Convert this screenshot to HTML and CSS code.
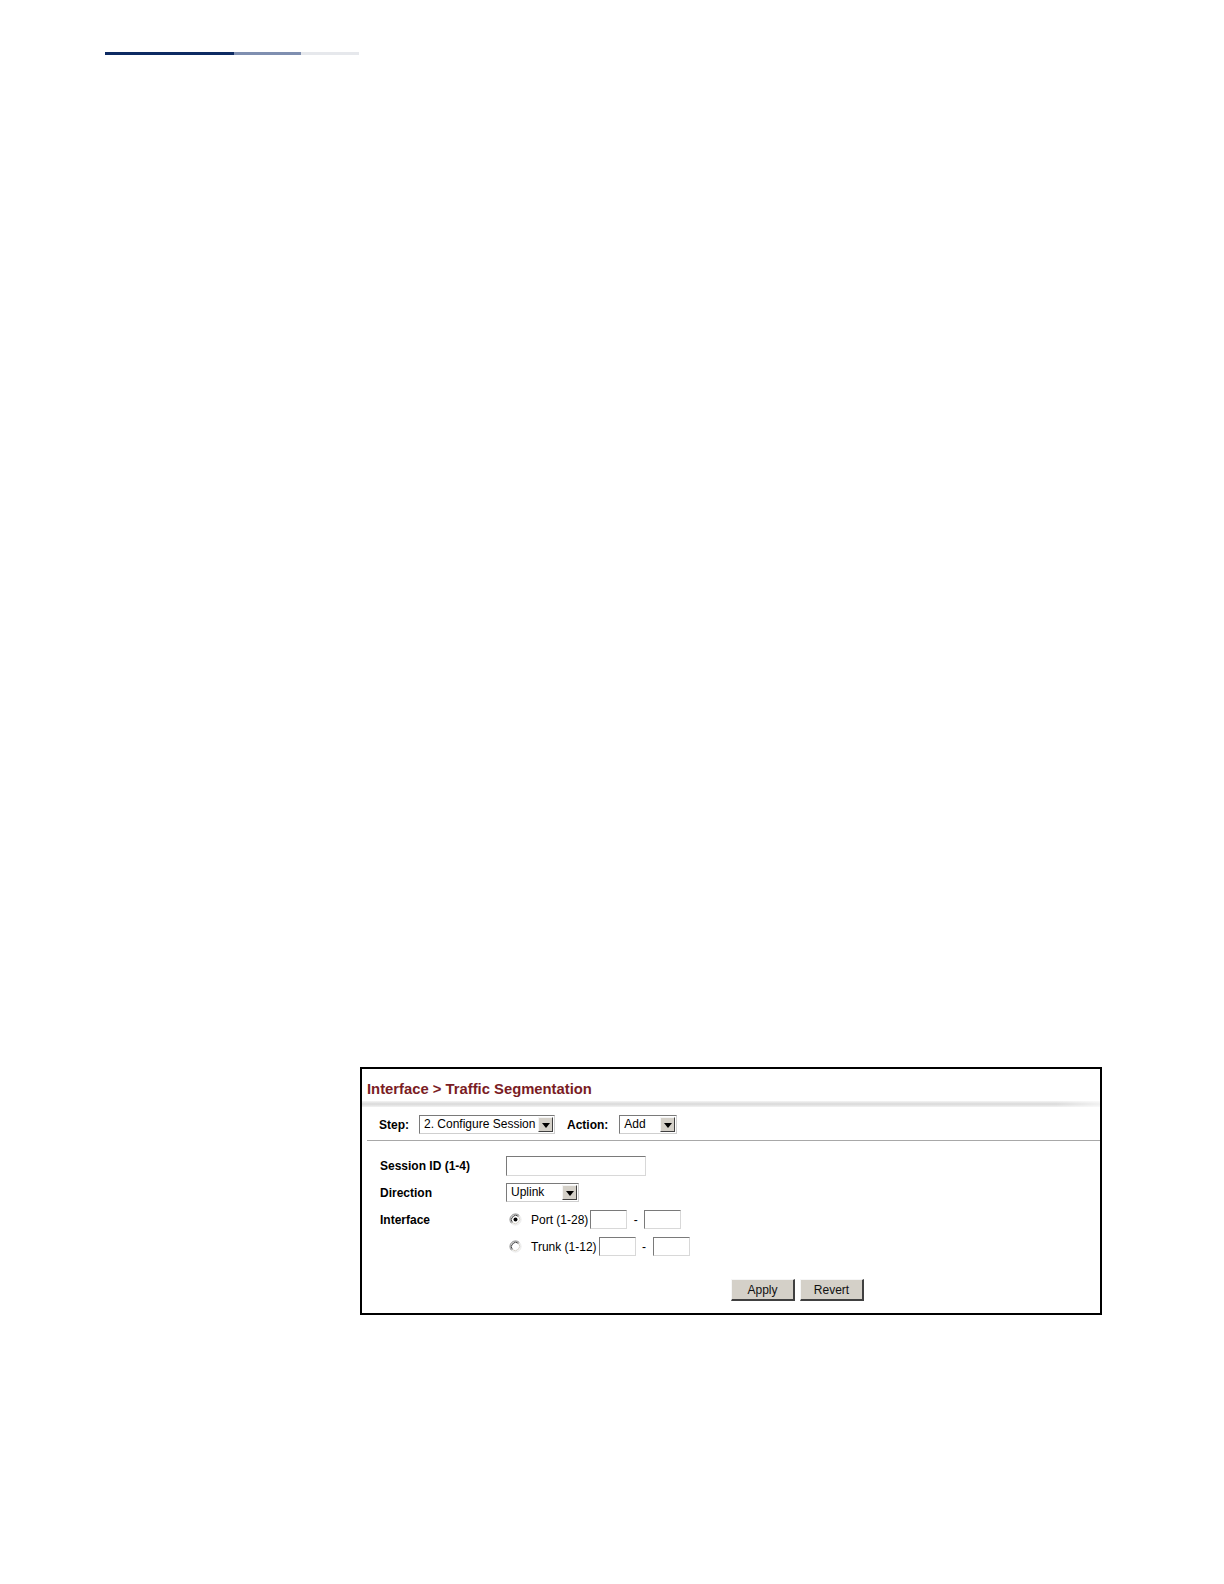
FILE: index.html
```html
<!DOCTYPE html>
<html>
<head>
<meta charset="utf-8">
<title>Interface &gt; Traffic Segmentation</title>
<link rel="stylesheet" href="styles.css">
</head>
<body>
<div class="topbar"><span class="seg seg-dark"></span><span class="seg seg-mid"></span><span class="seg seg-light"></span></div>

<div class="shot">
  <div class="title">Interface &gt; Traffic Segmentation</div>
  <div class="shadow"></div>
  <div class="steprow">
    <span class="blabel">Step:</span>
    <div class="select sel-step"><span class="seltext">2. Configure Session</span><span class="arrow"><span class="tri"></span></span></div>
    <span class="blabel act">Action:</span>
    <div class="select sel-action"><span class="seltext">Add</span><span class="arrow"><span class="tri"></span></span></div>
  </div>
  <div class="divider"></div>
  <div class="form">
    <div class="row">
      <span class="label">Session ID (1-4)</span>
      <span class="input in-session"></span>
    </div>
    <div class="row">
      <span class="label">Direction</span>
      <div class="select sel-dir"><span class="seltext">Uplink</span><span class="arrow"><span class="tri"></span></span></div>
    </div>
    <div class="row">
      <span class="label">Interface</span>
      <div class="ctrl">
        <svg class="radio" width="13" height="13" viewBox="0 0 13 13"><circle cx="6.5" cy="6.5" r="5.5" fill="#fff"/><path d="M10.4 2.6A5.5 5.5 0 0 0 2.6 10.4" fill="none" stroke="#808080" stroke-width="1"/><path d="M9.6 3.4A4.4 4.4 0 0 0 3.4 9.6" fill="none" stroke="#404040" stroke-width="1"/><path d="M2.6 10.4A5.5 5.5 0 0 0 10.4 2.6" fill="none" stroke="#e8e8e8" stroke-width="1"/><path d="M3.4 9.6A4.4 4.4 0 0 0 9.6 3.4" fill="none" stroke="#d4d0c8" stroke-width="1"/><circle cx="6.5" cy="6.5" r="2" fill="#000"/></svg>
        <span class="rtext">Port (1-28)</span>
        <span class="input in-small"></span>
        <span class="dash">-</span>
        <span class="input in-small"></span>
      </div>
    </div>
    <div class="row">
      <span class="label"></span>
      <div class="ctrl">
        <svg class="radio" width="13" height="13" viewBox="0 0 13 13"><circle cx="6.5" cy="6.5" r="5.5" fill="#fff"/><path d="M10.4 2.6A5.5 5.5 0 0 0 2.6 10.4" fill="none" stroke="#808080" stroke-width="1"/><path d="M9.6 3.4A4.4 4.4 0 0 0 3.4 9.6" fill="none" stroke="#404040" stroke-width="1"/><path d="M2.6 10.4A5.5 5.5 0 0 0 10.4 2.6" fill="none" stroke="#e8e8e8" stroke-width="1"/><path d="M3.4 9.6A4.4 4.4 0 0 0 9.6 3.4" fill="none" stroke="#d4d0c8" stroke-width="1"/></svg>
        <span class="rtext">Trunk (1-12)</span>
        <span class="input in-small"></span>
        <span class="dash">-</span>
        <span class="input in-small"></span>
      </div>
    </div>
  </div>
  <div class="buttons">
    <span class="btn">Apply</span>
    <span class="btn">Revert</span>
  </div>
</div>
</body>
</html>
```

FILE: styles.css
```css
html, body {
  margin: 0;
  padding: 0;
  background: #fff;
}
body {
  font-family: "Liberation Sans", Arial, sans-serif;
  color: #000;
  width: 1224px;
  min-height: 1584px;
}
.topbar {
  display: flex;
  margin: 52px 0 0 105px;
  height: 3px;
  width: 254px;
}
.seg { display: block; height: 3px; }
.seg-dark { width: 129px; background: #0d2a62; }
.seg-mid { width: 67px; background: #7f8fb0; }
.seg-light { width: 58px; background: #e6e8ec; }

.shot {
  margin: 1012px 0 0 360px;
  width: 738px;
  border: 2px solid #000;
  background: #fff;
}
.title {
  height: 32px;
  padding-left: 5px;
  box-sizing: border-box;
  padding-top: 12px;
  font-size: 14.8px;
  font-weight: bold;
  color: #7a1c24;
  line-height: 16px;
}
.shadow {
  height: 6px;
  background: linear-gradient(to bottom, #f4f4f4 0%, #d9d9d9 50%, #f2f2f2 100%);
  -webkit-mask-image: linear-gradient(to right, #000 0%, #000 94%, rgba(0,0,0,0.4) 100%);
}
.steprow {
  display: flex;
  align-items: center;
  height: 33px;
  padding-left: 17px;
  box-sizing: border-box;
  padding-top: 2px;
}
.blabel {
  font-size: 12px;
  font-weight: bold;
  margin-right: 10px;
}
.blabel.act { margin-left: 12px; margin-right: 11px; }

.select {
  display: flex;
  align-items: stretch;
  height: 19px;
  box-sizing: border-box;
  border-top: 1px solid #7a7a7a;
  border-left: 1px solid #7a7a7a;
  border-right: 1px solid #cfcfcf;
  border-bottom: 1px solid #cfcfcf;
  background: #fff;
  padding: 1px;
}
.seltext {
  flex: 1;
  font-size: 12px;
  line-height: 15px;
  padding-left: 3px;
  white-space: nowrap;
  overflow: hidden;
}
.arrow {
  width: 15px;
  box-sizing: border-box;
  background: #d4d0c8;
  border-top: 1px solid #f4f4f4;
  border-left: 1px solid #f4f4f4;
  border-right: 1px solid #404040;
  border-bottom: 1px solid #404040;
  display: flex;
  align-items: center;
  justify-content: center;
}
.tri {
  width: 0;
  height: 0;
  border-left: 4px solid transparent;
  border-right: 4px solid transparent;
  border-top: 5px solid #000;
  margin-top: 1px;
}
.sel-step { width: 136px; }
.sel-action { width: 58px; }
.sel-dir { width: 73px; }

.divider {
  height: 1px;
  margin-left: 5px;
  background: #a8a8a8;
}
.form {
  padding-top: 11px;
  padding-left: 18px;
}
.row {
  display: flex;
  align-items: center;
  height: 27px;
}
.label {
  width: 126px;
  font-size: 12px;
  font-weight: bold;
  flex: none;
}
.ctrl {
  display: flex;
  align-items: center;
  padding-left: 3px;
}
.radio { flex: none; margin-right: 9px; }
.rtext { font-size: 12px; margin-right: 2px; }
.dash { font-size: 12px; width: 17px; text-align: center; }
.input {
  display: block;
  box-sizing: border-box;
  background: #fff;
  border-top: 1px solid #7a7a7a;
  border-left: 1px solid #7a7a7a;
  border-right: 1px solid #d8d8d8;
  border-bottom: 1px solid #d8d8d8;
}
.in-session { width: 140px; height: 20px; }
.in-small { width: 37px; height: 19px; }

.buttons {
  display: flex;
  gap: 5px;
  padding-left: 369px;
  padding-top: 19px;
  padding-bottom: 12px;
}
.btn {
  display: flex;
  align-items: center;
  justify-content: center;
  width: 64px;
  height: 22px;
  box-sizing: border-box;
  background: #d4d0c8;
  border-top: 1px solid #f6f6f6;
  border-left: 1px solid #f6f6f6;
  border-right: 2px solid #404040;
  border-bottom: 2px solid #404040;
  font-size: 12px;
  color: #111;
}
```
